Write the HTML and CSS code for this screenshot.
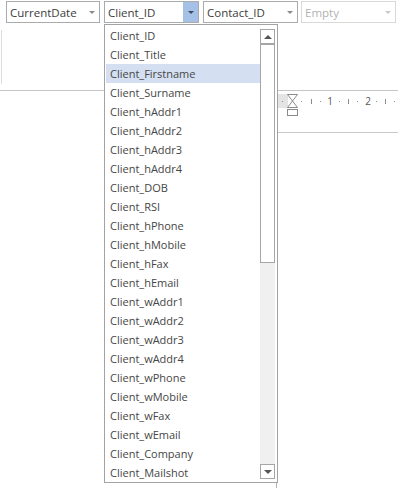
FILE: index.html
```html
<!DOCTYPE html>
<html>
<head>
<meta charset="utf-8">
<link rel="stylesheet" href="styles.css">
</head>
<body>
<div class="app">
  <div class="ribbon">
    <div class="combos">
      <div class="combo w94"><span class="val">CurrentDate</span><span class="btn"><span class="tri"></span></span></div>
      <div class="combo w95 active"><span class="val">Client_ID</span><span class="btn"><span class="tri"></span></span></div>
      <div class="combo w96"><span class="val">Contact_ID</span><span class="btn"><span class="tri"></span></span></div>
      <div class="combo w95 disabled"><span class="val">Empty</span><span class="btn"><span class="tri"></span></span></div>
    </div>
    <div class="group"></div>
  </div>
  <div class="docarea">
    <div class="pane"></div>
    <div class="doc">
      <div class="ruler">
        <svg width="121" height="41" viewBox="0 0 121 41">
          <rect x="0" y="2" width="121" height="14" fill="#ffffff"/>
          <rect x="0" y="2" width="11" height="14" fill="#e4e4e4"/>
          <circle cx="5.5" cy="9.5" r="0.6" fill="#888"/>
          <path d="M10.5 2.5 H20.5 L15.5 9 Z M10.5 15.5 H20.5 L15.5 9 Z" fill="#fff" stroke="#8a8a8a" stroke-width="1"/>
          <rect x="10.5" y="17.5" width="10" height="6" fill="#fff" stroke="#8a8a8a" stroke-width="1"/>
          <circle cx="24.5" cy="9.5" r="0.6" fill="#888"/>
          <line x1="34.5" y1="7" x2="34.5" y2="12" stroke="#8a8a8a"/>
          <circle cx="43.5" cy="9.5" r="0.6" fill="#888"/>
          <text x="53" y="13" class="rnum" text-anchor="middle">1</text>
          <circle cx="62.5" cy="9.5" r="0.6" fill="#888"/>
          <line x1="71.5" y1="7" x2="71.5" y2="12" stroke="#8a8a8a"/>
          <circle cx="80.5" cy="9.5" r="0.6" fill="#888"/>
          <text x="91" y="13" class="rnum" text-anchor="middle">2</text>
          <circle cx="99.5" cy="9.5" r="0.6" fill="#888"/>
          <line x1="108.5" y1="7" x2="108.5" y2="12" stroke="#8a8a8a"/>
          <circle cx="117.5" cy="9.5" r="0.6" fill="#888"/>
        </svg>
      </div>
    </div>
  </div>
  <div class="dropdown">
    <ul class="items">
      <li>Client_ID</li>
      <li>Client_Title</li>
      <li class="sel">Client_Firstname</li>
      <li>Client_Surname</li>
      <li>Client_hAddr1</li>
      <li>Client_hAddr2</li>
      <li>Client_hAddr3</li>
      <li>Client_hAddr4</li>
      <li>Client_DOB</li>
      <li>Client_RSI</li>
      <li>Client_hPhone</li>
      <li>Client_hMobile</li>
      <li>Client_hFax</li>
      <li>Client_hEmail</li>
      <li>Client_wAddr1</li>
      <li>Client_wAddr2</li>
      <li>Client_wAddr3</li>
      <li>Client_wAddr4</li>
      <li>Client_wPhone</li>
      <li>Client_wMobile</li>
      <li>Client_wFax</li>
      <li>Client_wEmail</li>
      <li>Client_Company</li>
      <li>Client_Mailshot</li>
    </ul>
    <div class="scrollbar">
      <div class="sbtn up"><span class="utri"></span></div>
      <div class="thumb"></div>
      <div class="track"></div>
      <div class="sbtn down"><span class="dtri"></span></div>
    </div>
  </div>
</div>
</body>
</html>
```

FILE: styles.css
```css
* { box-sizing: border-box; }
html, body { margin: 0; padding: 0; }
body {
  width: 398px;
  height: 488px;
  overflow: hidden;
  background: #ffffff;
  font-family: "Open Sans", "Noto Sans", sans-serif;
  font-size: 11px;
  color: #444444;
}
.app { position: relative; width: 398px; height: 488px; }

.ribbon {
  height: 91px;
  border-bottom: 1px solid #c6c6c6;
  padding-top: 1px;
  background: #ffffff;
}
.combos {
  display: flex;
  padding-left: 6px;
  gap: 4px;
}
.combo {
  height: 22px;
  border: 1px solid #ababab;
  background: #fff;
  display: flex;
  align-items: center;
}
.w94 { width: 94px; }
.w95 { width: 95px; }
.w96 { width: 95px; margin-right: -1px; }
.combo .val {
  flex: 1;
  padding-left: 3px;
  font-size: 11.5px;
  color: #3c3c3c;
  white-space: nowrap;
  overflow: hidden;
}
.combo .btn {
  width: 15px;
  height: 100%;
  display: flex;
  align-items: center;
  justify-content: center;
}
.tri {
  width: 0; height: 0;
  border-left: 3px solid transparent;
  border-right: 3px solid transparent;
  border-top: 3px solid #8a8a8a;
}
.combo.active .btn { background: #a6c1e6; width: 15px; }
.combo.active .tri { border-top-color: #3a4a60; }
.combo.disabled { border-color: #d9d9d9; }
.combo.disabled .val { color: #b2b2b2; }
.combo.disabled .tri { border-top-color: #c8c8c8; }

.group {
  margin-top: 7px;
  height: 54px;
  width: 3px;
  border-left: 1px solid #dcdcdc;
  margin-left: 1px;
}

.docarea {
  display: flex;
  height: 397px;
}
.pane { width: 277px; background: #ffffff; }
.doc {
  flex: 1;
  border-left: 1px solid #b4b4b4;
  background: #ffffff;
}
.ruler {
  height: 42px;
  border-bottom: 1px solid #c8c8c8;
  padding-top: 1px;
}
.ruler svg { display: block; }
.rnum { font-family: "Open Sans", sans-serif; font-size: 10px; fill: #555; }

.dropdown {
  position: absolute;
  left: 104px;
  top: 24px;
  width: 174px;
  height: 459px;
  border: 1px solid #a3a3a3;
  background: #ffffff;
  display: flex;
  padding: 1px 2px 0 1px;
}
.items {
  list-style: none;
  margin: 0;
  padding: 0;
  width: 154px;
}
.items li {
  height: 19px;
  line-height: 19px;
  padding-left: 4px;
  font-size: 11px;
  color: #464646;
  white-space: nowrap;
}
.items li.sel { background: #d4e0f1; }
.scrollbar {
  width: 15px;
  margin-top: 3px;
  margin-bottom: 3px;
  display: flex;
  flex-direction: column;
}
.sbtn {
  height: 15px;
  border: 1px solid #a6a6a6;
  background: #fff;
  display: flex;
  align-items: center;
  justify-content: center;
}
.utri {
  width: 0; height: 0;
  border-left: 4px solid transparent;
  border-right: 4px solid transparent;
  border-bottom: 4px solid #555;
}
.dtri {
  width: 0; height: 0;
  border-left: 4px solid transparent;
  border-right: 4px solid transparent;
  border-top: 4px solid #555;
}
.thumb {
  height: 219px;
  border: 1px solid #a6a6a6;
  background: #fff;
}
.track { flex: 1; background: #f0f0f0; }
```
